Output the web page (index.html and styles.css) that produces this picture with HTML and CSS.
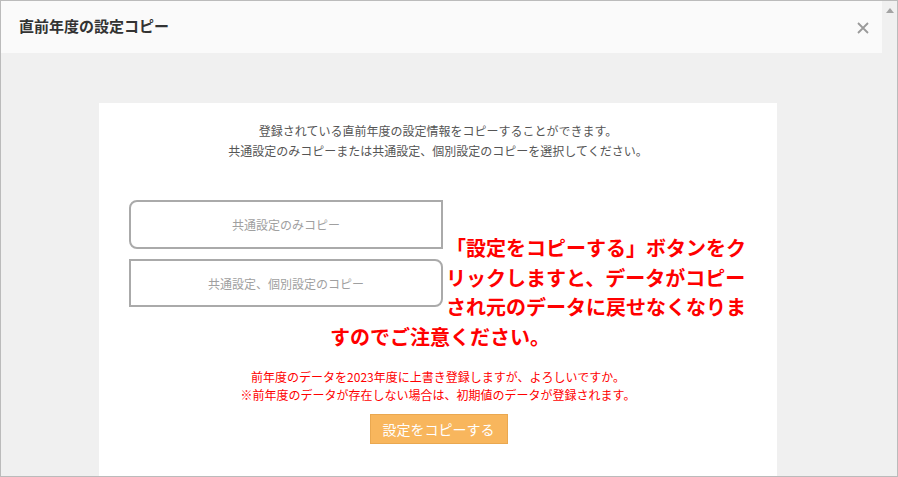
FILE: index.html
```html
<!doctype html>
<html lang="ja">
<head>
    <meta charset="UTF-8">
    <title>直前年度の設定コピー</title>
    <link rel="stylesheet" href="styles.css">
</head>
<body>

    <div class="window">

        <div class="main">

            <div class="header">
                <h1>直前年度の設定コピー</h1>
                <span class="close">
                    <svg width="12" height="12" viewBox="0 0 12 12">
                        <path d="M1 1L11 11M11 1L1 11" stroke="#9a9a9a" stroke-width="1.8" fill="none"/>
                    </svg>
                </span>
            </div>

            <div class="content">
                <div class="card">

                    <p class="intro">
                        登録されている直前年度の設定情報をコピーすることができます。<br>
                        共通設定のみコピーまたは共通設定、個別設定のコピーを選択してください。
                    </p>

                    <div class="choices">
                        <div class="choice first">共通設定のみコピー</div>
                        <div class="choice second">共通設定、個別設定のコピー</div>
                    </div>

                    <p class="warn">
                        前年度のデータを2023年度に上書き登録しますが、よろしいですか。<br>
                        ※前年度のデータが存在しない場合は、初期値のデータが登録されます。
                    </p>

                    <div class="actions">
                        <button class="copy">設定をコピーする</button>
                    </div>

                    <div class="note">
                        <span class="indent">「設定をコピーする」ボタンをク</span>
                        <span class="indent">リックしますと、データがコピー</span>
                        <span class="indent">され元のデータに戻せなくなりま</span>
                        <span>すのでご注意ください。</span>
                    </div>

                </div>
            </div>

        </div>

        <div class="scrollbar">
            <span class="arrow"></span>
        </div>

    </div>

</body>
</html>
```

FILE: styles.css
```css
body{
    margin: 0;
    font-family: "Noto Sans CJK JP", "Noto Sans", sans-serif;
    background-color: #fff;
}

.window{
    width: 898px;
    height: 477px;
    box-sizing: border-box;
    border: 1px solid #bbb;
    display: flex;
    overflow: hidden;
    background-color: #f0f0f0;
}

.main{
    flex: 1;
    display: flex;
    flex-direction: column;
}

.header{
    height: 52px;
    background-color: #fafafa;
    display: flex;
    align-items: center;
    justify-content: space-between;
    padding: 0 13px 0 18px;
}

.header h1{
    margin: 0;
    font-size: 15px;
    font-weight: bold;
    color: #333;
    line-height: 20px;
    padding-bottom: 2px;
}

.close{
    display: flex;
    padding-top: 2px;
}

.content{
    flex: 1;
    padding: 50px 0 0 98px;
}

.card{
    width: 678px;
    height: 100%;
    background-color: #fff;
    position: relative;
    padding-top: 18px;
    box-sizing: border-box;
}

.intro{
    margin: 0;
    text-align: center;
    font-size: 12px;
    line-height: 20px;
    color: #555;
}

.choices{
    margin: 39px 0 0 30px;
    display: flex;
    flex-direction: column;
    gap: 10px;
}

.choice{
    width: 314px;
    height: 49px;
    box-sizing: border-box;
    border: 2px solid #aaa;
    display: flex;
    align-items: center;
    justify-content: center;
    font-size: 12px;
    color: #a0a0a0;
}

.choice.first{
    border-radius: 8px 0 0 8px;
}

.choice.second{
    height: 48px;
    border-radius: 0 8px 8px 0;
}

.warn{
    margin: 61px 0 0;
    text-align: center;
    font-size: 12px;
    line-height: 18px;
    color: #f00;
}

.actions{
    margin-top: 10px;
    display: flex;
    justify-content: center;
    padding-left: 1px;
}

.copy{
    width: 138px;
    height: 30px;
    border: 1px solid #eaa850;
    background-color: #f8b65d;
    color: #fff;
    font-family: inherit;
    font-size: 14px;
    padding: 0;
}

.note{
    position: absolute;
    left: 231px;
    top: 130px;
    font-size: 20px;
    font-weight: bold;
    line-height: 29.5px;
    color: #f00;
    white-space: nowrap;
}

.note span{
    display: block;
}

.note .indent{
    margin-left: 116px;
}

.scrollbar{
    width: 15px;
    background-color: #f0f0f0;
    display: flex;
    justify-content: center;
    padding-top: 7px;
}

.arrow{
    width: 0;
    height: 0;
    border-left: 4px solid transparent;
    border-right: 4px solid transparent;
    border-bottom: 5px solid #a3a3a3;
}
```
